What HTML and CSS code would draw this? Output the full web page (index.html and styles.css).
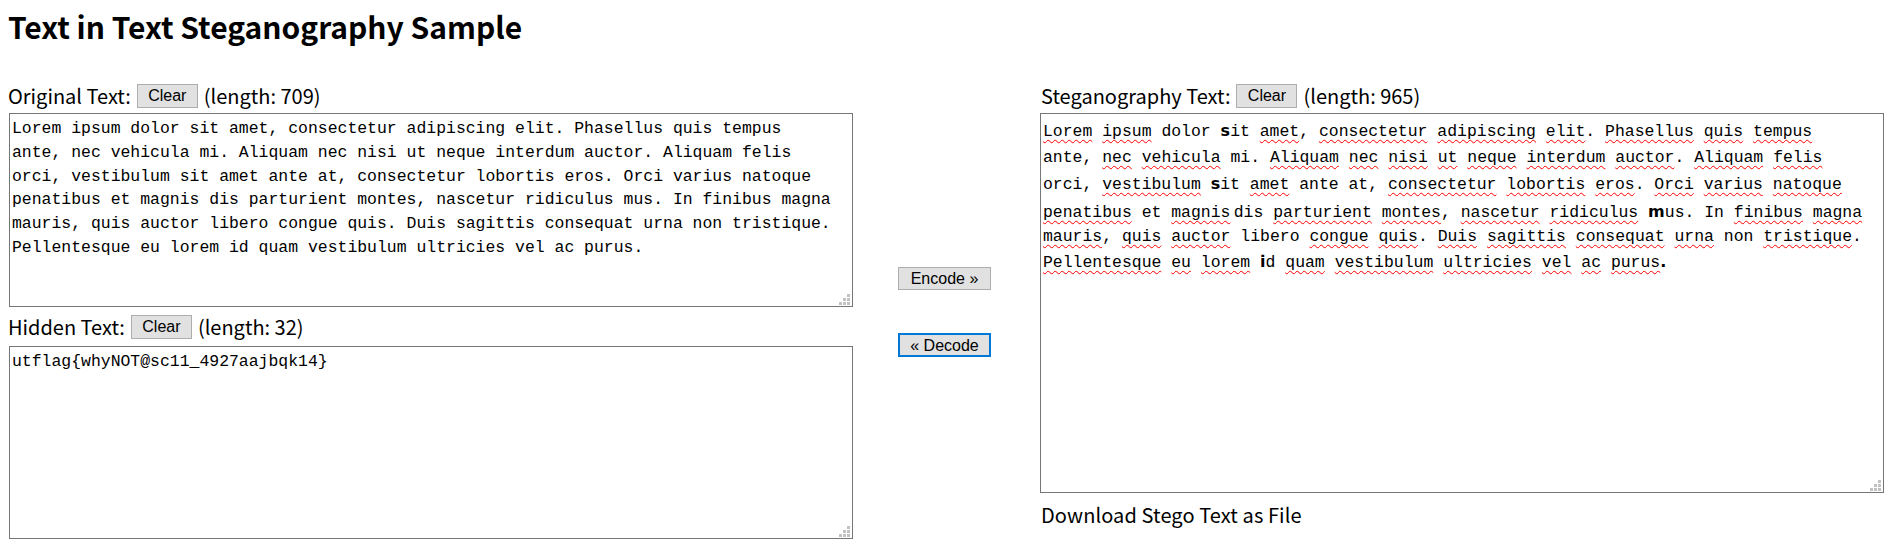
FILE: index.html
```html
<!DOCTYPE html>
<html lang="en">
<head>
<meta charset="utf-8">
<title>Text in Text Steganography Sample</title>
<link rel="stylesheet" href="styles.css">
</head>
<body>
<h1 class="title">Text in Text Steganography Sample</h1>
<div class="app">
  <div class="col col-left">
    <div class="field-label">
      <span>Original Text:</span>
      <button class="btn btn-clear">Clear</button>
      <span>(length: 709)</span>
    </div>
    <div class="box box-orig">
      <textarea class="ta" spellcheck="false">Lorem ipsum dolor sit amet, consectetur adipiscing elit. Phasellus quis tempus ante, nec vehicula mi. Aliquam nec nisi ut neque interdum auctor. Aliquam felis orci, vestibulum sit amet ante at, consectetur lobortis eros. Orci varius natoque penatibus et magnis dis parturient montes, nascetur ridiculus mus. In finibus magna mauris, quis auctor libero congue quis. Duis sagittis consequat urna non tristique. Pellentesque eu lorem id quam vestibulum ultricies vel ac purus.</textarea>
      <svg class="grip" width="11" height="11" viewBox="0 0 11 11"><rect x="8" y="0" width="3" height="3"/><rect x="4" y="4" width="3" height="3"/><rect x="8" y="4" width="3" height="3"/><rect x="0" y="8" width="3" height="3"/><rect x="4" y="8" width="3" height="3"/><rect x="8" y="8" width="3" height="3"/></svg>
    </div>
    <div class="field-label field-label-hidden">
      <span>Hidden Text:</span>
      <button class="btn btn-clear">Clear</button>
      <span>(length: 32)</span>
    </div>
    <div class="box box-hidden">
      <textarea class="ta" spellcheck="false">utflag{whyNOT@sc11_4927aajbqk14}</textarea>
      <svg class="grip" width="11" height="11" viewBox="0 0 11 11"><rect x="8" y="0" width="3" height="3"/><rect x="4" y="4" width="3" height="3"/><rect x="8" y="4" width="3" height="3"/><rect x="0" y="8" width="3" height="3"/><rect x="4" y="8" width="3" height="3"/><rect x="8" y="8" width="3" height="3"/></svg>
    </div>
  </div>
  <div class="col-mid">
    <button class="btn btn-action btn-encode">Encode &raquo;</button>
    <button class="btn btn-action btn-decode">&laquo; Decode</button>
  </div>
  <div class="col col-right">
    <div class="field-label">
      <span>Steganography Text:</span>
      <button class="btn btn-clear">Clear</button>
      <span>(length: 965)</span>
    </div>
    <div class="box box-stego">
      <div class="ta stego">
        <div class="ln"><span class="sp">Lorem</span><span class="tx"> </span><span class="sp">ipsum</span><span class="tx"> dolor </span><span class="hg">ѕ</span><span class="tx">it </span><span class="sp">amet</span><span class="tx">, </span><span class="sp">consectetur</span><span class="tx"> </span><span class="sp">adipiscing</span><span class="tx"> </span><span class="sp">elit</span><span class="tx">. </span><span class="sp">Phasellus</span><span class="tx"> </span><span class="sp">quis</span><span class="tx"> </span><span class="sp">tempus</span></div>
        <div class="ln"><span class="tx">ante, </span><span class="sp">nec</span><span class="tx"> </span><span class="sp">vehicula</span><span class="tx"> mi. </span><span class="sp">Aliquam</span><span class="tx"> </span><span class="sp">nec</span><span class="tx"> </span><span class="sp">nisi</span><span class="tx"> </span><span class="sp">ut</span><span class="tx"> </span><span class="sp">neque</span><span class="tx"> </span><span class="sp">interdum</span><span class="tx"> </span><span class="sp">auctor</span><span class="tx">. </span><span class="sp">Aliquam</span><span class="tx"> </span><span class="sp">felis</span></div>
        <div class="ln"><span class="tx">orci, </span><span class="sp">vestibulum</span><span class="tx"> </span><span class="hg">ѕ</span><span class="tx">it </span><span class="sp">amet</span><span class="tx"> ante at, </span><span class="sp">consectetur</span><span class="tx"> </span><span class="sp">lobortis</span><span class="tx"> </span><span class="sp">eros</span><span class="tx">. </span><span class="sp">Orci</span><span class="tx"> </span><span class="sp">varius</span><span class="tx"> </span><span class="sp">natoque</span></div>
        <div class="ln"><span class="sp">penatibus</span><span class="tx"> et </span><span class="sp">magnis</span><span class="thin">&#8201;</span><span class="tx">dis </span><span class="sp">parturient</span><span class="tx"> </span><span class="sp">montes</span><span class="tx">, </span><span class="sp">nascetur</span><span class="tx"> </span><span class="sp">ridiculus</span><span class="tx"> </span><span class="hg">m</span><span class="tx">us. In </span><span class="sp">finibus</span><span class="tx"> </span><span class="sp">magna</span></div>
        <div class="ln"><span class="sp">mauris</span><span class="tx">, </span><span class="sp">quis</span><span class="tx"> </span><span class="sp">auctor</span><span class="tx"> libero </span><span class="sp">congue</span><span class="tx"> </span><span class="sp">quis</span><span class="tx">. </span><span class="sp">Duis</span><span class="tx"> </span><span class="sp">sagittis</span><span class="tx"> </span><span class="sp">consequat</span><span class="tx"> </span><span class="sp">urna</span><span class="tx"> non </span><span class="sp">tristique</span><span class="tx">.</span></div>
        <div class="ln"><span class="sp">Pellentesque</span><span class="tx"> </span><span class="sp">eu</span><span class="tx"> </span><span class="sp">lorem</span><span class="tx"> </span><span class="hg">і</span><span class="tx">d </span><span class="sp">quam</span><span class="tx"> </span><span class="sp">vestibulum</span><span class="tx"> </span><span class="sp">ultricies</span><span class="tx"> </span><span class="sp">vel</span><span class="tx"> </span><span class="sp">ac</span><span class="tx"> </span><span class="sp">purus</span><span class="hg">.</span></div>
      </div>
      <svg class="grip" width="11" height="11" viewBox="0 0 11 11"><rect x="8" y="0" width="3" height="3"/><rect x="4" y="4" width="3" height="3"/><rect x="8" y="4" width="3" height="3"/><rect x="0" y="8" width="3" height="3"/><rect x="4" y="8" width="3" height="3"/><rect x="8" y="8" width="3" height="3"/></svg>
    </div>
    <div class="download">Download Stego Text as File</div>
  </div>
</div>
</body>
</html>
```
FILE: styles.css
```css
html, body {
  background: #ffffff;
}
body {
  margin: 8px;
  color: #000000;
  font-family: "Noto Sans CJK JP", "Noto Sans", sans-serif;
}
.title {
  margin: 0;
  font-size: 30px;
  line-height: 36px;
  font-weight: 700;
  letter-spacing: 0;
}
.app {
  display: flex;
  align-items: flex-start;
  margin-top: 40px;
}
.col {
  display: flex;
  flex-direction: column;
}
.col-left {
  width: 845px;
}
.col-right {
  width: 845px;
}
.col-right .field-label,
.col-right .download {
  padding-left: 2px;
}
.field-label {
  display: flex;
  align-items: center;
  gap: 6px;
  height: 24px;
  font-size: 20px;
  line-height: 24px;
  white-space: nowrap;
}
.field-label-hidden {
  margin-top: 8px;
}
.btn {
  font-family: "Liberation Sans", Arial, sans-serif;
  color: #000000;
  background: #e1e1e1;
  border: 1px solid #adadad;
  border-radius: 0;
  margin: 0;
  cursor: default;
}
.btn-clear {
  width: 61px;
  height: 24px;
  padding: 0;
  font-size: 16px;
  line-height: 22px;
}
.box {
  position: relative;
  margin-left: 1px;
  margin-top: 5px;
}
.box-hidden {
  margin-top: 7px;
}
.ta {
  display: block;
  box-sizing: border-box;
  width: 844px;
  margin: 0;
  padding: 3px 12px 2px 2px;
  border: 1px solid #767676;
  background: #ffffff;
  color: #000000;
  font-family: "Liberation Mono", "DejaVu Sans Mono", monospace;
  font-size: 16.45px;
  line-height: 23.8px;
  resize: none;
  outline: none;
  overflow: hidden;
}
.box-orig .ta {
  height: 194px;
}
.box-hidden .ta {
  height: 193px;
}
.stego {
  height: 380px;
  padding-top: 5px;
}
.ln {
  height: 26.3px;
  line-height: 26.3px;
  white-space: pre;
}
.sp {
  text-decoration: underline wavy #ff0000;
  text-decoration-thickness: 1px;
  text-underline-offset: 3px;
  text-decoration-skip-ink: none;
}
.hg {
  font-family: "DejaVu Sans", sans-serif;
  font-weight: 700;
  font-size: 16px;
  line-height: 1;
}
.thin {
  font-family: "Liberation Sans", sans-serif;
}
.grip {
  position: absolute;
  right: 3px;
  bottom: 2px;
  fill: #c2c2c2;
}
.col-mid {
  width: 188px;
  display: flex;
  flex-direction: column;
  align-items: flex-start;
  padding-left: 45px;
  box-sizing: border-box;
  padding-top: 183px;
}
.btn-action {
  width: 93px;
  height: 23px;
  padding: 0;
  font-size: 16px;
  line-height: 21px;
}
.btn-decode {
  margin-top: 43px;
  height: 24px;
  border: 2px solid #0078d7;
}
.download {
  margin-top: 10px;
  font-size: 20px;
  line-height: 24px;
  letter-spacing: 0.1px;
}
```
